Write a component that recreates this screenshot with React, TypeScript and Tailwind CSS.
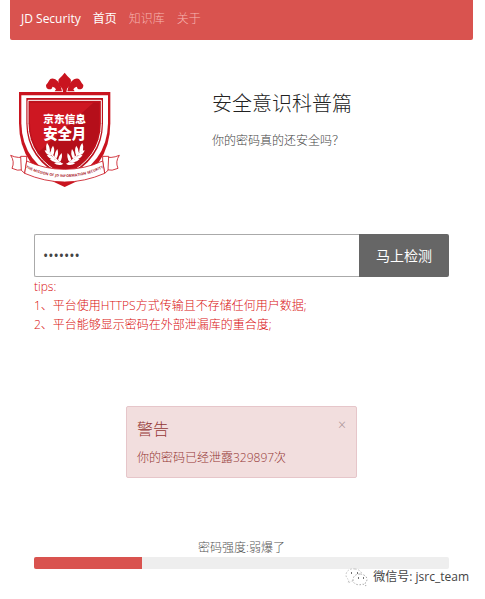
import { useState } from "react";

const sans = "font-['Open_Sans','Noto_Sans_CJK_SC',sans-serif]";

function Laurel() {
  return (
    <g fill="#fff">
      <path d="M190 313 Q160 306 146 268 Q166 298 190 313Z" />
      <path d="M139 272 Q136 258 141 249 Q152 261 149 278Z" />
      <path d="M150 287 Q137 282 134 271 Q149 273 156 286Z" />
      <path d="M152 280 Q152 265 159 257 Q167 270 159 287Z" />
      <path d="M159 299 Q145 294 140 284 Q157 284 166 298Z" />
      <path d="M163 290 Q164 276 172 267 Q178 282 169 296Z" />
      <path d="M170 308 Q156 306 149 297 Q165 294 178 307Z" />
      <path d="M174 300 Q176 287 185 279 Q189 293 180 305Z" />
      <path d="M185 314 Q171 317 162 309 Q177 303 190 311Z" />
    </g>
  );
}

function Crest() {
  return (
    <svg viewBox="30 36 330 345" className="h-[115px] w-[110px] shrink-0" role="img" aria-label="京东信息安全月">
      <g fill="#c9141f">
        <path d="M194 38 Q203 50 212 58 Q217 71 201 86 L199 96 H189 L187 86 Q171 71 176 58 Q185 50 194 38Z" />
        <path d="M186 94 Q182 68 166 58 Q152 52 147 62 Q144 68 138 75 Q138 86 146 88 Q157 89 157 80 Q164 80 168 88 L164 94Z" />
        <path d="M202 94 Q206 68 222 58 Q236 52 241 62 Q244 68 250 75 Q250 86 242 88 Q231 89 231 80 Q224 80 220 88 L224 94Z" />
        <path d="M57 96 H331 V190 Q331 327 194 381 Q57 327 57 190Z" />
      </g>
      <path d="M64 106 H324 V190 Q322 312 194 365 Q66 312 64 190Z" fill="#fff" />
      <path d="M79 114 H309 V190 Q309 300 194 354 Q79 300 79 190Z" fill="#bd111c" />
      <path d="M84 121 H304 V190 Q303 294 194 347 Q85 294 84 190Z" fill="none" stroke="#fff" strokeWidth="3" />
      <path d="M90 128 H298 V190 Q298 285 194 334 Q90 285 90 190Z" fill="#ce1722" />
      <path d="M280 128 H298 V190 Q298 285 194 334 Q143 311 116 276Z" fill="#b50f1a" />
      <text x="194" y="188" textAnchor="middle" fontSize="32" fontWeight="900" fill="#fff">京东信息</text>
      <text x="194" y="236" textAnchor="middle" fontSize="43" fontWeight="900" fill="#fff">安全月</text>
      <Laurel />
      <g transform="translate(388 0) scale(-1 1)">
        <Laurel />
      </g>
      <g fill="#fff" stroke="#c9141f" strokeWidth="2.5" strokeLinejoin="round">
        <path d="M79 289 Q55 297 32 286 Q45 305 36 325 Q51 334 72 329Z" />
        <path d="M309 289 Q333 297 358 286 Q345 305 354 325 Q338 334 316 329Z" />
        <path d="M62 289 L80 289 L80 303 L74 340 L64 331Z" />
        <path d="M326 289 L308 289 L308 303 L314 340 L324 331Z" />
        <path d="M80 303 Q134 328 194 328 Q254 328 308 303 L314 340 Q254 366 194 366 Q134 366 74 340Z" />
      </g>
      <path id="ribbon" d="M79 324 Q134 351 194 351 Q254 351 309 324" fill="none" />
      <text fontSize="11" fontWeight="700" fill="#a8202a">
        <textPath href="#ribbon" startOffset="50%" textAnchor="middle">THE MISSION OF JD INFORMATION SECURITY</textPath>
      </text>
    </svg>
  );
}

function WeChatMark() {
  return (
    <svg viewBox="0 0 24 20" className="h-5 w-6" fill="#fff" stroke="#888" strokeWidth="0.7" strokeDasharray="1.6 1.6" aria-hidden="true">
      <path stroke="#aaa" d="M10 2 C5 1 1 4 1 8 C1 10 2 12 4 13 L3 16 L7 14 H10 C16 14 18 10 17 7 C16 4 13 2 10 2Z" />
      <path d="M15 7 C11 7 8 9 8 13 C8 17 13 19 18 17 L21 19 L20 16 C25 12 20 7 15 7Z" />
      <path d="M6 6h1M12 6h1M13 11h1M18 11h1" stroke="#444" strokeWidth="1.4" strokeDasharray="none" />
    </svg>
  );
}

export default function App() {
  const [password, setPassword] = useState("letmein");
  const [warning, setWarning] = useState(true);

  return (
    <div className={`relative bg-white pr-3 pb-[30px] pl-2.5 text-xs text-[#777] ${sans}`}>
      <nav className="flex h-10 items-start gap-3 rounded-b-xs bg-[#d9534f] pr-3 pl-[11px] pt-2.5 leading-[18px]">
        <a href="#home" className="text-white">JD Security</a>
        <a href="#home" className="text-white">首页</a>
        <a href="#library" className="font-light text-[#f7b5b2]">知识库</a>
        <a href="#about" className="font-light text-[#f7b5b2]">关于</a>
      </nav>

      <header className="mt-8 flex gap-[92px]">
        <Crest />
        <div className="pt-[18px]">
          <h1 className="text-xl leading-7 font-light text-[#222]">安全意识科普篇</h1>
          <p className="mt-3 leading-[22px] font-light text-[#444]">你的密码真的还安全吗？</p>
        </div>
      </header>

      <main className="mx-6 mt-[47px]">
        <form className="flex h-[43px]" onSubmit={(e) => e.preventDefault()}>
          <input
            type="password"
            aria-label="密码"
            value={password}
            onChange={(e) => setPassword(e.target.value)}
            className="min-w-0 flex-1 rounded-l-xs border border-r-0 border-[#aaa] px-2 text-sm text-[#444] outline-none"
          />
          <button type="submit" className="w-[90px] rounded-r-xs bg-[#666] text-sm text-white">马上检测</button>
        </form>
        <div className="leading-[19px] font-light text-[#d90f0f]">
          <p>tips:</p>
          <p>1、平台使用HTTPS方式传输且不存储任何用户数据;</p>
          <p>2、平台能够显示密码在外部泄漏库的重合度;</p>
        </div>

        <div className="mt-[72px] h-[72px]">
          {warning && (
            <div role="alert" className="mx-[92px] flex h-full items-start justify-between rounded-xs border border-[#e6c6ca] bg-[#f2dede] px-2.5 pt-2.5 font-light text-[#943634]">
              <div>
                <h2 className="text-base leading-6">警告</h2>
                <p className="mt-1.5 leading-[22px]">你的密码已经泄露329897次</p>
              </div>
              <button type="button" aria-label="关闭" onClick={() => setWarning(false)} className="text-sm leading-4 text-[#a89294]">×</button>
            </div>
          )}
        </div>

        <div className="mt-[60px]">
          <p id="strength" className="text-center leading-[19px] font-light text-[#555]">密码强度:弱爆了</p>
          <div role="progressbar" aria-labelledby="strength" aria-valuenow={26} aria-valuemin={0} aria-valuemax={100} className="h-3 overflow-hidden rounded-xs bg-[#eee]">
            <div className="h-full w-[26%] bg-[#d9534f]" />
          </div>
        </div>
      </main>

      <div className="absolute right-4 bottom-3 flex items-center gap-1 leading-5 text-[#444]">
        <WeChatMark />
        <span>微信号: jsrc_team</span>
      </div>
    </div>
  );
}
